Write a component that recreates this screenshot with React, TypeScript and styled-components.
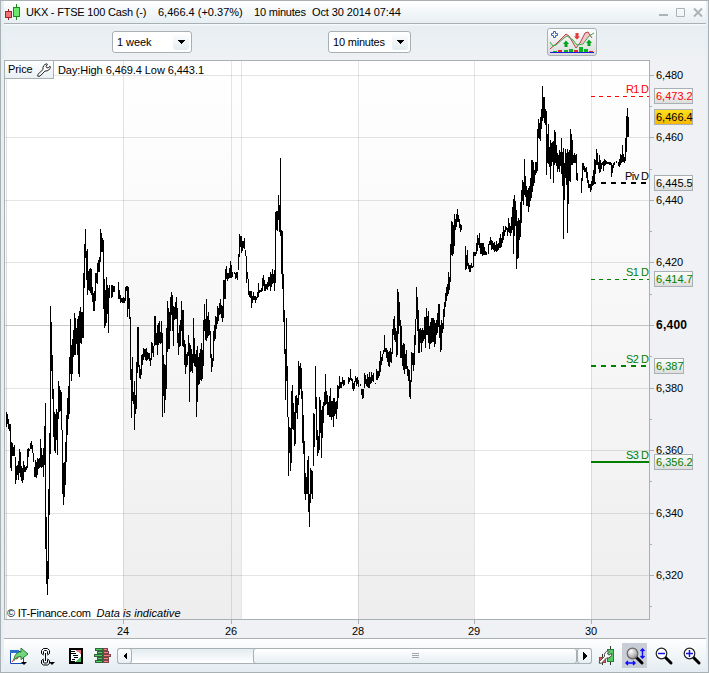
import React from "react";
import styled, { createGlobalStyle } from "styled-components";

const EDGE = "#a9b0b4";

const Global = createGlobalStyle`
  html, body { margin: 0; padding: 0; }
  body { width: 709px; height: 673px; overflow: hidden; }
  * { box-sizing: border-box; }
  svg { display: block; }
`;

const Frame = styled.div`
  width: 709px;
  height: 673px;
  display: flex;
  flex-direction: column;
  padding: 0 2px 0 3px;
  border: 1px solid ${EDGE};
  background: #e6eff4;
  font: 11px "Liberation Sans", Arial, sans-serif;
  color: #000;
`;

const TitleBar = styled.header`
  height: 23px;
  flex: none;
  display: flex;
  align-items: center;
  border-bottom: 1px solid ${EDGE};
  background: linear-gradient(#fff, #e7eff3);
`;

const Text = styled.span<{ $w: number; $ml?: number; $ls?: number }>`
  flex: none;
  width: ${(p) => p.$w}px;
  margin-left: ${(p) => p.$ml ?? 0}px;
  letter-spacing: ${(p) => p.$ls ?? 0}px;
  white-space: pre;
  line-height: 13px;
`;

const WindowButtons = styled.div`
  margin-left: auto;
  margin-right: 3px;
`;

const Toolbar = styled.div`
  height: 36px;
  flex: none;
  display: grid;
  grid-template-columns: 80px 83px 50px;
  column-gap: 136px;
  padding-left: 108px;
  align-items: center;
  background: linear-gradient(#fbfdfd 0, #e7eff3 2px, #eff1f4 100%);
`;

const Select = styled.div`
  height: 22px;
  display: flex;
  align-items: center;
  justify-content: space-between;
  padding: 0 2px 0 4px;
  border: 1px solid ${EDGE};
  border-radius: 3px;
  background: #fff;
`;

const Arrow = styled.span`
  width: 16px;
  height: 16px;
  display: grid;
  place-items: center;
  border-radius: 3px;
  background: linear-gradient(#fcfdfe, #e4edf2);
`;

const IndicatorButton = styled.div`
  width: 50px;
  height: 28px;
  padding: 1px;
  border: 1px solid ${EDGE};
  border-radius: 3px;
  background: linear-gradient(#fff, #d9dadb);
`;

const ChartArea = styled.main`
  position: relative;
  flex: none;
  height: 579px;
  background: #eff1f4;
`;

const PriceTab = styled.div`
  position: absolute;
  left: 0;
  top: 0;
  width: 50px;
  height: 19px;
  display: flex;
  align-items: center;
  border: 1px solid ${EDGE};
  background: linear-gradient(#fff, #e9f0f4);
`;

const BottomBar = styled.footer`
  flex: 1;
  display: grid;
  grid-template-columns: 30px 27px 28px 28px 475px 30px 25px 34px 22px;
  align-items: center;
  justify-items: center;
  background: linear-gradient(#fff, #e3ecf1);
`;

const Tool = styled.div<{ $on?: boolean }>`
  width: 25px;
  height: 25px;
  display: grid;
  place-items: center;
  background: ${(p) => (p.$on ? "#c9cdd5" : "transparent")};
`;

const Scroll = styled.div`
  width: 475px;
  height: 16px;
  display: grid;
  grid-template-columns: 15px 121px 324px 15px;
  background: linear-gradient(#e3ecf1, #fff);
  border: solid ${EDGE};
  border-width: 1px 0;
  border-radius: 3px;
`;

const ScrollPart = styled.div<{ $col: number }>`
  grid-column: ${(p) => p.$col};
  margin: -1px 0;
  height: 16px;
  display: grid;
  place-items: center;
  border: 1px solid ${EDGE};
  border-radius: 3px;
  background: linear-gradient(#fff, #e7eff3);
`;

const BARS = `6,412,427 7,414,424 8,419,429 9,424,431 10,424,468 11,442,471 12,443,456 13,447,456 14,445,456 15,457,484
16,466,480 17,465,475 18,461,480 19,449,473 20,452,477 21,466,481 22,468,483 23,461,480 24,465,472 25,467,472 26,466,470
27,449,468 28,448,457 29,449,451 30,443,449 31,441,449 32,445,453 33,453,462 34,467,477 35,460,477 36,462,478 37,458,475 38,459,469 39,458,468
40,439,467 41,448,468 42,455,467 43,448,477 44,426,465 45,403,549 46,517,584 47,561,595 48,489,579 49,433,515 50,306,454
51,322,371 52,355,399 53,389,437 54,412,451 55,414,453 56,409,440 57,412,455 58,381,419 59,386,412 60,390,411 61,392,430
62,430,494 63,463,505 64,462,497 65,442,485 66,415,462 67,398,435 68,386,419 69,357,414 70,319,374 71,345,381 72,339,374
73,330,357 74,313,355 75,318,355 76,328,344 77,319,355 78,316,374 79,311,377 80,307,343 81,312,344 82,312,338 83,273,338
84,244,288 85,229,258 86,251,280 87,249,295 88,271,290 89,269,291 90,268,293 91,269,295 92,287,302 93,293,311 94,291,311
95,273,301 96,273,283 97,263,284 98,260,272 99,257,272 100,229,262 101,233,252 102,238,252 103,240,309 104,279,328 105,290,326
106,277,323 107,285,314 108,288,333 109,285,298 111,285,298 112,285,297 113,286,292 114,286,292 118,282,299 119,290,299
120,295,303 121,298,302 122,298,303 123,297,303 124,298,303 125,287,301 126,286,291 127,286,317 128,287,309 129,298,319
130,317,380 131,369,418 132,357,401 133,392,404 134,381,430 135,395,414 136,362,409 137,327,373 138,327,367 139,365,378
140,369,379 141,355,375 142,354,365 143,348,360 144,349,357 145,349,360 146,348,361 147,352,360 148,353,359 149,353,361
150,358,366 151,342,360 152,343,353 153,346,357 154,316,346 155,316,345 156,333,345 157,325,355 158,323,345 159,321,343
160,332,344 161,321,343 162,333,417 163,355,396 164,364,413 165,365,400 166,328,389 167,301,352 168,308,349 169,312,349
170,297,331 171,292,315 172,295,331 173,306,346 174,307,320 175,302,319 176,297,319 177,308,343 178,333,355 179,325,347
180,320,346 181,301,331 182,310,346 183,310,347 184,340,365 185,344,374 186,354,367 187,352,365 188,335,356 189,343,402
190,345,372 191,349,371 192,354,373 193,318,363 194,338,366 195,354,367 196,350,417 197,346,402 198,357,385 199,353,384
200,349,380 201,343,381 202,350,379 203,320,366 204,304,331 205,319,340 206,299,341 207,316,338 208,312,336 209,320,335
210,331,358 211,354,372 212,358,367 213,331,361 214,325,341 215,316,339 216,317,329 217,306,324 218,308,321 219,303,315
220,299,314 221,305,318 222,306,322 223,280,318 224,280,299 225,269,299 226,266,279 227,273,281 228,273,279 229,268,278
230,261,278 231,265,278 232,272,277 234,272,274 235,273,279 236,272,278 237,272,280 238,254,270 239,234,257 240,236,247
241,236,253 242,241,251 243,241,248 244,238,249 245,250,256 246,256,283 247,272,279 248,279,295 249,291,297 250,291,298
251,291,308 252,296,303 253,292,300 254,296,300 255,296,303 256,297,300 257,292,298 258,283,297 259,290,293 260,290,292
261,288,292 262,278,291 263,275,286 264,280,291 265,284,291 266,284,289 267,282,290 268,277,287 269,277,286 270,272,291
271,274,287 272,269,284 273,274,283 274,270,291 275,212,283 276,211,230 277,211,231 278,195,220 279,205,232 280,158,236
281,230,274 282,231,289 283,274,322 284,310,354 285,349,400 286,318,381 287,366,417 288,417,476 289,427,453 290,428,471
291,391,463 292,385,429 293,403,430 294,412,446 295,396,444 296,395,413 297,398,419 298,361,405 299,366,395 300,363,389
301,368,399 302,391,443 303,415,454 304,441,494 305,473,500 306,477,494 307,460,494 308,456,512 309,494,527 310,468,503
311,470,494 312,471,499 313,413,466 314,414,447 315,366,409 316,397,440 317,430,456 318,436,453 319,397,450 320,400,433
321,410,458 322,406,438 323,402,423 324,392,406 325,374,405 326,391,404 327,395,415 328,402,415 329,396,417 330,388,417
331,401,420 332,401,417 333,398,427 334,398,416 335,402,414 336,401,419 337,385,409 338,386,398 339,376,389 340,382,388
341,382,388 342,377,384 343,380,386 344,380,385 348,377,384 349,378,382 350,369,380 351,378,381 352,379,389 353,383,391
354,381,389 355,376,382 356,378,386 357,377,384 358,380,387 360,384,386 361,389,395 362,389,399 363,389,398 364,373,388
365,375,384 366,379,386 367,374,387 368,377,388 369,372,388 370,377,384 371,372,383 372,375,381 373,373,382 375,383,384
376,369,380 377,371,380 378,371,378 379,361,376 380,351,372 381,357,365 382,354,361 383,350,354 384,335,352 385,348,352
386,348,358 387,350,362 388,352,366 389,351,367 390,348,362 391,352,363 392,329,354 393,319,335 394,316,340 395,328,342
396,331,357 397,289,355 398,292,334 399,302,326 400,320,358 401,326,358 402,345,366 403,343,370 404,344,374 405,354,369
406,350,369 407,366,376 408,369,381 409,370,397 410,380,399 411,352,382 412,353,365 413,353,371 414,335,365 415,319,345
416,287,319 417,297,331 418,310,353 419,329,353 420,328,343 421,330,352 422,328,343 423,330,341 424,317,339 425,317,348
426,308,335 427,316,335 428,311,343 429,326,349 430,322,344 431,318,343 432,318,342 433,318,342 434,320,347 435,323,344
436,320,335 437,313,333 438,304,327 439,304,338 440,325,352 441,320,350 442,323,333 443,309,329 444,302,317 445,293,307
446,287,301 447,284,296 448,272,294 449,277,290 450,244,282 451,221,255 452,222,256 453,225,254 454,214,246 455,219,230
456,214,227 457,209,222 458,215,222 459,219,228 460,224,232 461,225,230 465,246,270 466,255,269 467,250,266 468,263,269
469,265,272 470,265,272 471,263,268 472,266,268 473,252,267 474,252,256 475,252,256 476,243,254 477,235,251 478,238,245
479,233,248 480,243,254 481,243,254 482,243,256 483,243,255 484,247,255 485,251,255 486,252,255 488,244,254 489,241,245
490,237,245 491,240,250 492,241,249 493,243,250 494,242,252 495,245,251 496,241,252 497,244,251 498,243,250 499,238,248
500,234,248 501,238,247 502,232,243 503,226,240 504,230,236 505,226,232 506,227,230 507,228,236 508,218,232 509,223,233
510,226,236 511,217,233 512,207,230 513,199,254 514,195,236 515,201,226 516,210,269 517,221,259 518,218,258 519,220,240
520,202,237 521,190,223 522,180,201 523,182,205 524,159,195 525,176,197 526,186,206 527,190,206 528,188,212 529,186,207
530,178,201 531,160,198 532,160,192 533,162,186 534,170,183 535,162,175 536,162,173 537,129,171 538,119,138 539,123,139
540,117,141 541,109,129 542,86,121 543,97,118 544,97,123 545,109,125 546,111,175 547,134,163 548,124,164 549,147,167
550,140,179 551,143,166 552,142,162 553,141,183 554,130,165 555,132,163 556,145,166 557,153,172 558,155,169 559,150,172
560,152,166 561,138,174 562,152,186 563,148,239 564,163,200 565,149,178 566,153,185 567,149,233 568,152,204 569,150,181
570,129,182 571,134,165 572,140,165 573,155,163 574,153,163 575,155,163 576,154,180 577,173,181 581,178,193 582,163,181
583,163,170 584,166,172 585,168,172 586,167,178 587,172,183 588,180,188 589,184,188 590,184,192 591,181,190 592,176,186
593,170,185 594,159,182 595,160,174 596,149,165 597,153,165 598,162,169 599,155,173 600,160,172 601,163,169 602,162,165
603,161,171 604,159,166 605,160,165 606,161,164 607,162,164 608,162,164 609,162,165 610,162,165 611,163,177 612,165,173
613,163,168 614,162,165 616,161,163 618,162,166 619,159,167 620,154,165 621,155,163 622,145,162 623,154,162 624,157,163
625,138,161 626,116,152 627,108,137 628,117,137`;

const barPath = BARS.split(/\s+/)
  .map((b) => {
    const [x, high, low] = b.split(",").map(Number);
    return `M${x + 0.5} ${high}V${low}`;
  })
  .join("");

const prices = [6480, 6460, 6440, 6420, 6400, 6380, 6360, 6340, 6320];
const priceY = [75, 137, 200, 262, 325, 388, 450, 513, 575];
const minorY = [106, 169, 231, 294, 356, 419, 481, 544, 606];
const dayX: [number, string][] = [[123, "24"], [231, "26"], [358, "28"], [474, "29"], [591, "30"]];

type Level = { name: string; x: number; y: number; color: string; thick: number; dash?: string };
const levels: Level[] = [
  { name: "R1 D", x: 626, y: 96, color: "#f00", thick: 1, dash: "4 4" },
  { name: "Piv D", x: 625, y: 182, color: "#000", thick: 2, dash: "5 5" },
  { name: "S1 D", x: 626, y: 279, color: "#008000", thick: 1, dash: "4 4" },
  { name: "S2 D", x: 626, y: 365, color: "#008000", thick: 2, dash: "5 5" },
  { name: "S3 D", x: 626, y: 461, color: "#008000", thick: 2 },
];
const tags = [
  { v: "6,473.2", y: 88, color: "#f00", w: 39 },
  { v: "6,466.4", y: 109, color: "#000", w: 39, gold: true },
  { v: "6,445.5", y: 175, color: "#000", w: 39 },
  { v: "6,414.7", y: 271, color: "#008000", w: 39 },
  { v: "6,387", y: 358, color: "#008000", w: 30 },
  { v: "6,356.2", y: 454, color: "#008000", w: 39 },
];

const PriceChart = () => (
  <svg width="702" height="579" viewBox="4 60 702 579" fontFamily="Liberation Sans, Arial, sans-serif" fontSize="11">
    <defs>
      <linearGradient id="band" x1="0" y1="0" x2="0" y2="1">
        <stop offset="0" stopColor="#fff" />
        <stop offset="1" stopColor="#eee" />
      </linearGradient>
      <linearGradient id="tag" x1="0" y1="0" x2="0" y2="1">
        <stop offset="0" stopColor="#fff" />
        <stop offset="1" stopColor="#dcdcdc" />
      </linearGradient>
      <linearGradient id="gold" x1="0" y1="0" x2="0" y2="1">
        <stop offset="0" stopColor="#ffe01c" />
        <stop offset="1" stopColor="#f5b800" />
      </linearGradient>
    </defs>
    <rect x="4" y="60" width="646" height="560" fill="#fff" />
    {[[5, 2], [123, 118], [358, 116], [591, 58]].map(([x, w]) => (
      <rect key={x} x={x} y="61" width={w} height="558" fill="url(#band)" />
    ))}
    <g shapeRendering="crispEdges">
      {[6, 123, 231, 241, 358, 474, 591].map((x) => (
        <rect key={x} x={x} y="61" width="1" height="558" fill="#000" opacity=".1" />
      ))}
      {priceY.map((y) => (
        <rect key={y} x="5" y={y} width="644" height="1" fill="#000" opacity={y === 325 ? 0.21 : 0.1} />
      ))}
      {levels.map((l) => (
        <path key={l.name} d={`M591 ${l.y + l.thick / 2}H649`} stroke={l.color} strokeWidth={l.thick} strokeDasharray={l.dash} />
      ))}
      <path d={barPath} stroke="#000" />
      <path d="M4 60.5H650M4.500 60V620M649.500 60V620M4 619.500H650" stroke={EDGE} />
      {priceY.map((y) => (
        <rect key={y} x="650" y={y} width="4" height="1" fill={EDGE} />
      ))}
      {minorY.map((y) => (
        <rect key={y} x="650" y={y} width="2" height="1" fill={EDGE} />
      ))}
      {dayX.map(([x]) => (
        <rect key={x} x={x} y="620" width="1" height="4" fill={EDGE} />
      ))}
      <rect x="4" y="638" width="702" height="1" fill={EDGE} />
    </g>
    {levels.map((l) => (
      <text key={l.name} x={l.x} y={l.y - 3 + (l.thick === 2 ? 1 : 0)} fill={l.color} textLength={649 - l.x}>{l.name}</text>
    ))}
    {prices.map((p, i) =>
      p === 6400 ? (
        <text key={p} x="656" y={priceY[i] + 4} fontWeight="bold" fontSize="12" textLength="31">6,400</text>
      ) : (
        <text key={p} x="656" y={priceY[i] + 4} textLength="27">{p.toLocaleString("en-US")}</text>
      ),
    )}
    {tags.map((t) => (
      <g key={t.v}>
        <rect x="654.5" y={t.y + 0.5} width={t.w - 1} height="15" fill={t.gold ? "url(#gold)" : "url(#tag)"} stroke={EDGE} />
        <text x="656" y={t.y + 12} fill={t.color}>{t.v}</text>
      </g>
    ))}
    {dayX.map(([x, d]) => (
      <text key={d} x={x} y="635" textAnchor="middle">{d}</text>
    ))}
    <text x="58" y="74" textLength="146">Day:High 6,469.4 Low 6,443.1</text>
    <text x="7" y="617" textLength="84">© IT-Finance.com</text>
    <text x="96.5" y="617" fontStyle="italic" textLength="84">Data is indicative</text>
  </svg>
);

const Triangle = ({ dir }: { dir: "down" | "left" | "right" }) => (
  <svg width="8" height="8" viewBox="0 0 8 8" shapeRendering="crispEdges">
    <path d={dir === "down" ? "M0 2h8L4 6z" : dir === "left" ? "M6 0v8L2 4z" : "M2 0v8l4-4z"} />
  </svg>
);

const Logo = () => (
  <svg width="18" height="18" viewBox="5 4 18 18" shapeRendering="crispEdges">
    <path d="M9.500 10v11" stroke="#8d1f23" />
    <rect x="6.500" y="12.500" width="6" height="6" fill="#ee7277" stroke="#a52127" />
    <path d="M17.500 5v16" stroke="#1a8a1a" />
    <rect x="14.500" y="8.500" width="6" height="9" fill="#6be86b" stroke="#169016" />
  </svg>
);

const WRENCH = "M.8 11.500L6 6.500C5.500 3.500 7 1.200 10 .8L10.500 1.500 9 3.300 9.800 4.800H11.300L12.800 3.200 13.400 3.800C13.200 6.500 11 8.300 8 8L3 13.200H.8z";

const IndicatorArt = () => (
  <svg width="46" height="24" viewBox="0 0 46 24">
    <path d="M8 13l9-9 2 2-4 2-8 7zM31 13l5-10 3-1 4 6-3-2-6 8z" fill="#f3c6cb" />
    <path d="M19 6l5 4 4 5-1 3zM28 15l3-2-4 5zM1 12l4 4-4 3z" fill="#c6ecc4" />
    <path d="M1 19l7-6 9-9 3 2 7 12 4-5 5-10 3-1 4 6" fill="none" stroke="#bb4048" />
    <path d="M1 12l3 4 3-1 8-7 3-2 6 4 4 5 6-1 6-8 5-3" fill="none" stroke="#3fa548" />
    <path d="M4.500 1.500h2v2h2v2h-2v2h-2v-2h-2v-2h2z" fill="#fff" stroke="#2f66b4" />
    <path d="M17 10.500l3 3.500h-1.500v3h-3v-3H14zM40 9.500l3 3.500h-1.500v3h-3v-3H37z" fill="#00a51b" />
    <path d="M26.500 3h3v3.500H31l-3 3-3-3h1.500z" fill="#e33b3b" />
    <path d="M4 21h4v1H4zM15 20h4v2h-4zM20 19h4v3h-4zM30 17h4v5h-4zM35 19h4v3h-4z" fill="#0bb324" />
    <path d="M9 20h4v2H9zM25 20h4v2h-4zM40 21h4v1h-4z" fill="#dd2c2c" />
    <path d="M1 22.500h44" stroke="#1c1cdc" />
  </svg>
);

const ShareIcon = () => (
  <svg width="20" height="20" viewBox="9 645 20 20">
    <path d="M10.500 650.500h13v12h-13z" fill="#fff" stroke="#1848b8" />
    <path d="M10 649h9v3h-9z" fill="#2a6fd0" />
    <path d="M12 661l3-4 2 1 2-3" stroke="#d22" fill="none" />
    <path d="M14 659.500c0-5.500 3-8.500 7-8.500v-4l7 6-7 5.500v-3c-3 0-5 1-7 4z" fill="#72d67b" stroke="#2b7a36" />
    <path d="M21 661h6l-3 3z" fill="#000" />
  </svg>
);

const LinkIcon = () => (
  <svg width="16" height="20" viewBox="40 645 16 20" fill="none" stroke="#000">
    <path d="M43.500 654l-2-1.500v-3l2-2h4l2 2v3l-2 1.500M43.500 653.500v-3l1-1h2l1 1v3M43.500 658l-2 1.500v3l2 1.500h4l2-1.500v-3l-2-1.500M43.500 658.500v3l1 .5h2l1-.5v-3M45.500 652v8" />
    <path d="M49 661h6l-3 3z" fill="#000" stroke="none" />
  </svg>
);

const ListIcon = () => (
  <svg width="15" height="17" viewBox="67 648 15 17" shapeRendering="crispEdges">
    <rect x="69" y="650" width="12" height="14" fill="#fff" stroke="#000" strokeWidth="2" />
    <path d="M74 651h6v4z" fill="#ee6f76" />
    <path d="M75 663h5v-6z" fill="#42bf5a" />
    <path d="M70 652.500h4M70 654.500h5M72 656.500h5M73 658.500h4M71 660.500h3M70 662.500h4" stroke="#000" />
  </svg>
);

const DepthIcon = () => (
  <svg width="18" height="17" viewBox="94 648 18 17" shapeRendering="crispEdges">
    <path d="M95.500 649.500h7v2h-7zM97.500 652.500h5v2h-5zM94.500 655.500h8v2h-8zM97.500 658.500h5v2h-5zM95.500 661.500h7v2h-7z" fill="#4ad163" stroke="#33633a" />
    <path d="M103.500 649.500h4v2h-4zM103.500 652.500h5v2h-5zM103.500 655.500h7v2h-7zM103.500 658.500h5v2h-5zM103.500 661.500h5v2h-5z" fill="#f48088" stroke="#7d4347" />
  </svg>
);

const SettingsIcon = () => (
  <svg width="18" height="20" viewBox="598 645 18 20">
    <path d="M602.500 653v11M610.500 645v19" stroke="#333" />
    <rect x="599.500" y="656.500" width="6" height="5" fill="#e85f67" stroke="#943" />
    <rect x="607.500" y="648.500" width="6" height="12" fill="#55cc62" stroke="#23813a" />
    <g transform="translate(598.500 649)">
      <path d={WRENCH} fill="#fff" stroke="#444" />
    </g>
  </svg>
);

const Lens = ({ mark }: { mark: "minus" | "plus" | "fit" }) => (
  <svg width="20" height="20" viewBox="0 0 20 20">
    <defs>
      <radialGradient id="glass" cx=".35" cy=".3" r=".7">
        <stop offset="0" stopColor="#fff" />
        <stop offset="1" stopColor="#999" />
      </radialGradient>
    </defs>
    <path d="M10.500 10.500L17 17" stroke="#000" strokeWidth="3" strokeLinecap="round" />
    <circle cx="7.500" cy="7.500" r="5.300" fill={mark === "fit" ? "url(#glass)" : "#fff"} stroke={mark === "fit" ? "#666" : "#222"} strokeWidth="1.200" />
    {mark !== "fit" && <path d={mark === "plus" ? "M4 7.500h7M7.500 4v7" : "M4 7.500h7"} stroke="#1414e0" strokeWidth="1.500" />}
    {mark === "fit" && (
      <path d="M1 17h9M3 15l-2 2 2 2M8 15l2 2-2 2M17.500 3v9M15.500 5l2-2 2 2M15.500 10l2 2 2-2" fill="none" stroke="#0a0aff" strokeWidth="1.400" />
    )}
  </svg>
);

export default function App() {
  return (
    <Frame>
      <Global />
      <TitleBar>
        <Logo />
        <Text $w={132} $ml={4} $ls={-0.2}>UKX - FTSE 100 Cash (-)</Text>
        <Text $w={96}>6,466.4 (+0.37%)</Text>
        <Text $w={58} $ls={-0.2}>10 minutes</Text>
        <Text $w={100} $ls={-0.1}>Oct 30 2014 07:44</Text>
        <WindowButtons>
          <svg width="44" height="11" viewBox="659 7 44 11" fill="none" stroke="#adb3b6">
            <path d="M659 15h9" strokeWidth="2" />
            <path d="M676.500 8.500h8v8h-8z" />
            <path d="M694 8.500l8 8M702 8.500l-8 8" strokeWidth="2" />
          </svg>
        </WindowButtons>
      </TitleBar>
      <Toolbar>
        <Select>
          <Text $w={40} $ls={-0.05}>1 week</Text>
          <Arrow><Triangle dir="down" /></Arrow>
        </Select>
        <Select>
          <Text $w={54} $ls={-0.2}>10 minutes</Text>
          <Arrow><Triangle dir="down" /></Arrow>
        </Select>
        <IndicatorButton><IndicatorArt /></IndicatorButton>
      </Toolbar>
      <ChartArea>
        <PriceChart />
        <PriceTab>
          <Text $w={29} $ml={3} $ls={-0.1}>Price</Text>
          <svg width="14" height="14" viewBox="0 0 14 14">
            <path d={WRENCH} fill="#fff" stroke="#222" />
          </svg>
        </PriceTab>
      </ChartArea>
      <BottomBar>
        <Tool><ShareIcon /></Tool>
        <Tool><LinkIcon /></Tool>
        <Tool><ListIcon /></Tool>
        <Tool><DepthIcon /></Tool>
        <Scroll>
          <ScrollPart $col={1}><Triangle dir="left" /></ScrollPart>
          <ScrollPart $col={3}>
            <svg width="7" height="5" viewBox="0 0 7 5" stroke="#a0a6aa" shapeRendering="crispEdges">
              <path d="M0 .5h7M0 2.500h7M0 4.500h7" />
            </svg>
          </ScrollPart>
          <ScrollPart $col={4}><Triangle dir="right" /></ScrollPart>
        </Scroll>
        <Tool><SettingsIcon /></Tool>
        <Tool $on><Lens mark="fit" /></Tool>
        <Tool><Lens mark="minus" /></Tool>
        <Tool><Lens mark="plus" /></Tool>
      </BottomBar>
    </Frame>
  );
}
